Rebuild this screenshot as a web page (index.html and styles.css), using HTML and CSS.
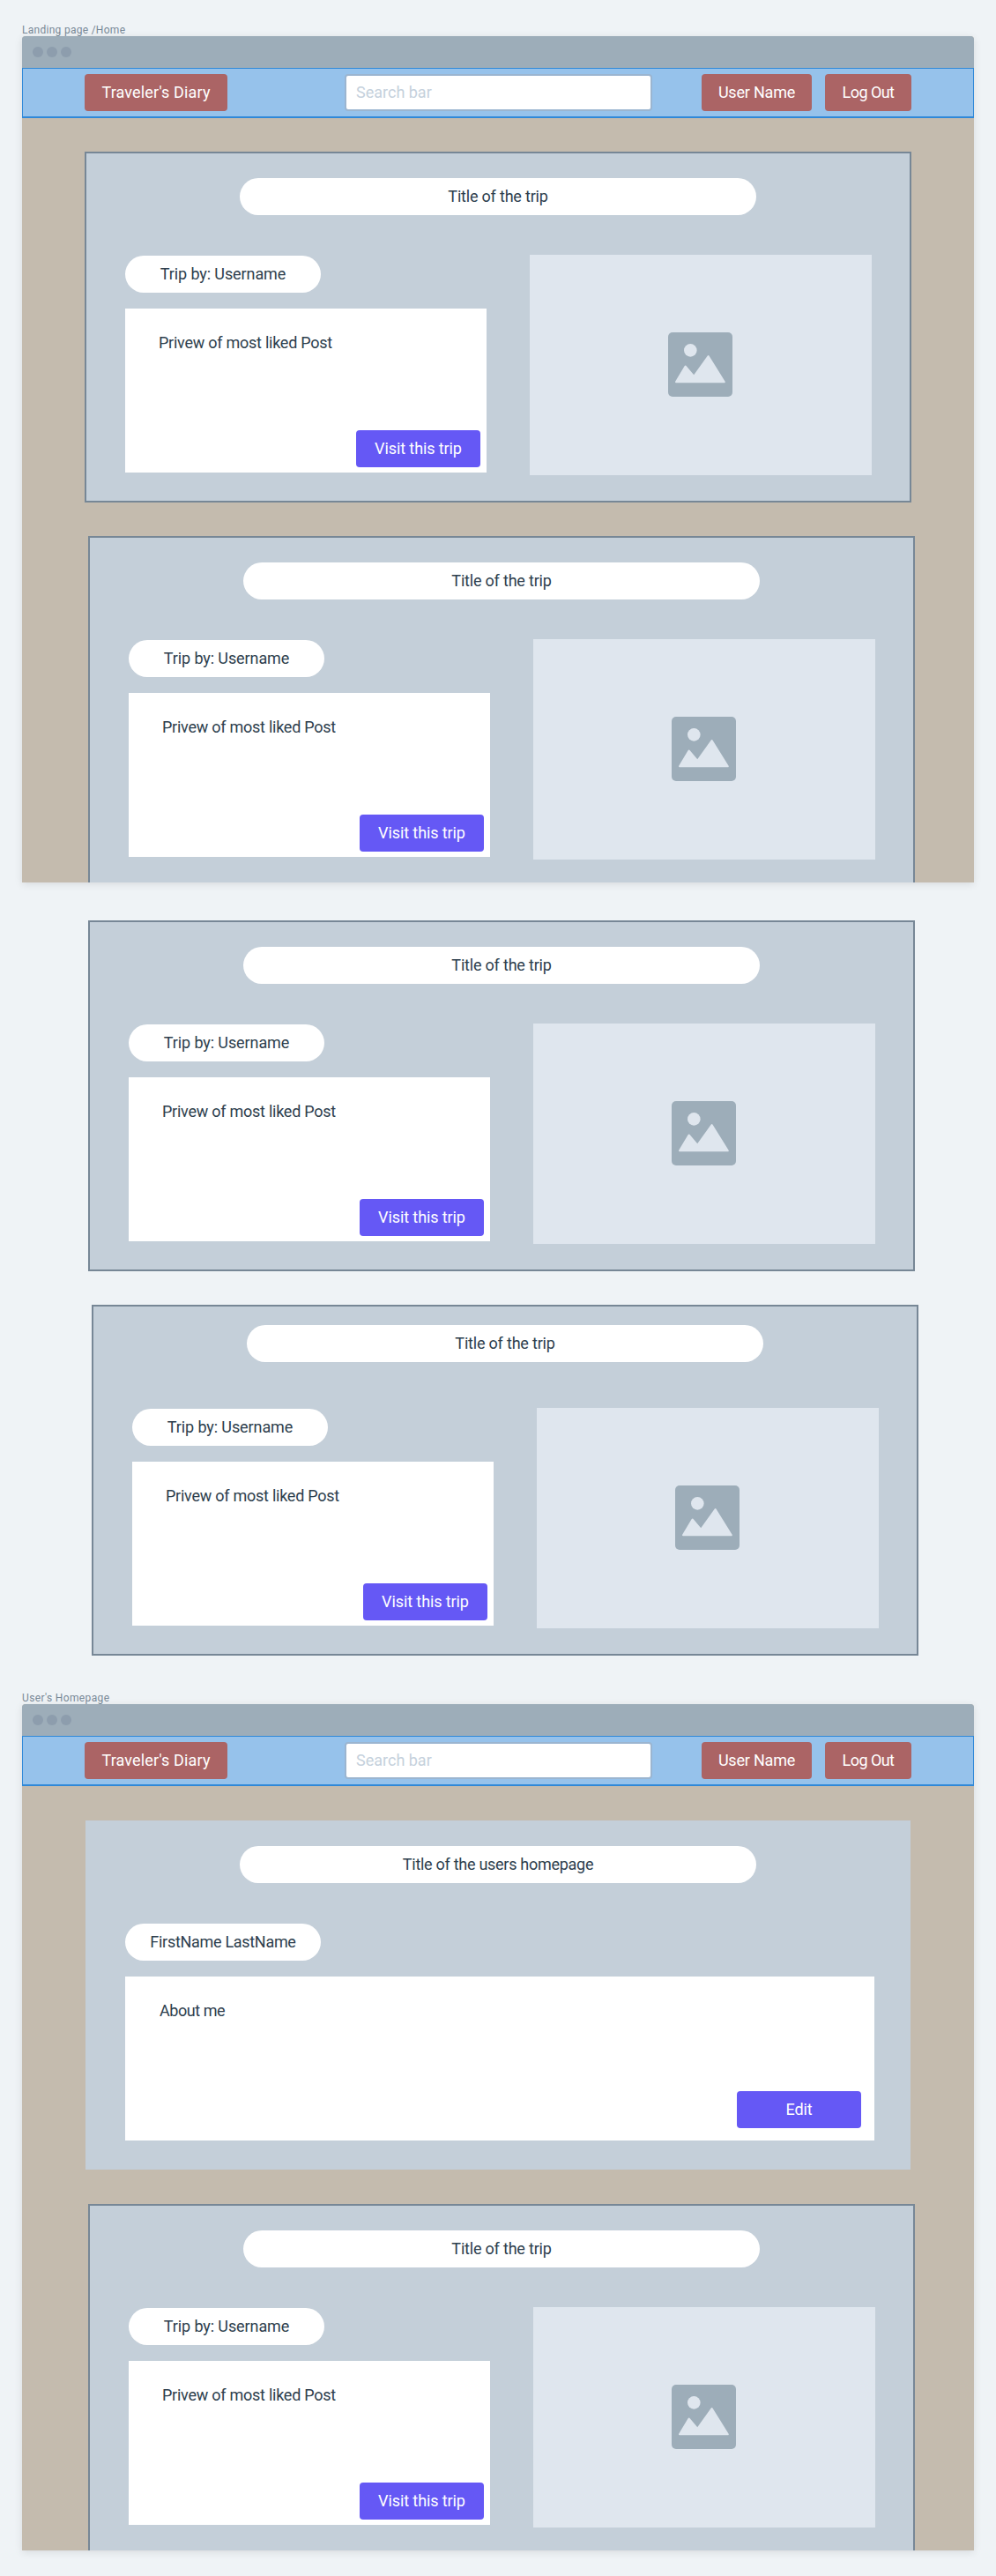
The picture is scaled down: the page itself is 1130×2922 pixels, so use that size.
FILE: index.html
```
<!DOCTYPE html>
<html lang="en">
<head>
<meta charset="utf-8">
<title>Traveler's Diary</title>
<link rel="stylesheet" href="styles.css">
</head>
<body>
<svg class="sprite" aria-hidden="true">
  <symbol id="picture" viewBox="0 0 73 73">
    <rect width="73" height="73" rx="5" fill="#9dadb9"/>
    <circle cx="25.3" cy="20.4" r="7.3" fill="#dfe6ee"/>
    <path d="M9 56.3 19.6 38.5 29.3 49.8 45.6 27 63.8 56.3Z" fill="#dfe6ee" stroke="#dfe6ee" stroke-width="2" stroke-linejoin="round"/>
  </symbol>
</svg>

<h2 class="label">Landing page /Home</h2>
<section class="window">
  <div class="titlebar"><i class="dot"></i><i class="dot"></i><i class="dot"></i></div>
  <nav class="nav">
    <a class="nav-btn brand">Traveler's Diary</a>
    <div class="search">Search bar</div>
    <a class="nav-btn user">User Name</a>
    <a class="nav-btn logout">Log Out</a>
  </nav>
  <main class="feed">
    <article class="card">
      <h3 class="pill title">Title of the trip</h3>
      <div class="row">
        <div class="info">
          <div class="pill byline">Trip by: Username</div>
          <div class="post"><p class="text">Privew of most liked Post</p><a class="action">Visit this trip</a></div>
        </div>
        <div class="photo"><svg class="icon"><use href="#picture"/></svg></div>
      </div>
    </article>
    <article class="card step-1">
      <h3 class="pill title">Title of the trip</h3>
      <div class="row">
        <div class="info">
          <div class="pill byline">Trip by: Username</div>
          <div class="post"><p class="text">Privew of most liked Post</p><a class="action">Visit this trip</a></div>
        </div>
        <div class="photo"><svg class="icon"><use href="#picture"/></svg></div>
      </div>
    </article>
  </main>
</section>

<section class="feed overflow">
  <article class="card step-1">
    <h3 class="pill title">Title of the trip</h3>
    <div class="row">
      <div class="info">
        <div class="pill byline">Trip by: Username</div>
        <div class="post"><p class="text">Privew of most liked Post</p><a class="action">Visit this trip</a></div>
      </div>
      <div class="photo"><svg class="icon"><use href="#picture"/></svg></div>
    </div>
  </article>
  <article class="card step-2">
    <h3 class="pill title raised">Title of the trip</h3>
    <div class="row">
      <div class="info">
        <div class="pill byline">Trip by: Username</div>
        <div class="post"><p class="text">Privew of most liked Post</p><a class="action">Visit this trip</a></div>
      </div>
      <div class="photo"><svg class="icon"><use href="#picture"/></svg></div>
    </div>
  </article>
</section>

<h2 class="label home-label">User's Homepage</h2>
<section class="window">
  <div class="titlebar"><i class="dot"></i><i class="dot"></i><i class="dot"></i></div>
  <nav class="nav">
    <a class="nav-btn brand">Traveler's Diary</a>
    <div class="search">Search bar</div>
    <a class="nav-btn user">User Name</a>
    <a class="nav-btn logout">Log Out</a>
  </nav>
  <main class="feed">
    <article class="card profile">
      <h3 class="pill title">Title of the users homepage</h3>
      <div class="row">
        <div class="info">
          <div class="pill byline">FirstName LastName</div>
          <div class="post"><p class="text">About me</p><a class="action edit">Edit</a></div>
        </div>
      </div>
    </article>
    <article class="card step-1">
      <h3 class="pill title">Title of the trip</h3>
      <div class="row">
        <div class="info">
          <div class="pill byline">Trip by: Username</div>
          <div class="post"><p class="text">Privew of most liked Post</p><a class="action">Visit this trip</a></div>
        </div>
        <div class="photo"><svg class="icon"><use href="#picture"/></svg></div>
      </div>
    </article>
  </main>
</section>
</body>
</html>
```

FILE: styles.css
```
* {
  box-sizing: border-box;
}

body {
  margin: 0;
  padding: 27px 25px 29px;
  background: #eff3f6;
  color: #2d3e4d;
  font: 18px/42px Roboto, "Liberation Sans", sans-serif;
  white-space: nowrap;
}

h2,
h3,
p {
  margin: 0;
  font-weight: 400;
}

.sprite {
  display: none;
}

.label {
  height: 14px;
  color: #788896;
  font-size: 12px;
  line-height: 14px;
  letter-spacing: 0.28px;
}

.home-label {
  margin-top: 41px;
  letter-spacing: 0.36px;
}

.window {
  width: 1080px;
  height: 960px;
  overflow: hidden;
  border-radius: 4px 4px 0 0;
  background: #c4bbae;
  box-shadow: 0 2px 10px rgba(0, 0, 0, 0.1);
}

.titlebar {
  display: flex;
  align-items: center;
  gap: 4px;
  height: 36px;
  padding-left: 12px;
  background: #9dadb9;
}

.dot {
  width: 12px;
  height: 12px;
  border-radius: 50%;
  background: #8d9dad;
}

.nav {
  display: flex;
  align-items: flex-start;
  height: 57px;
  padding: 6px 70px 0;
  border: 1px solid #2f88d8;
  border-bottom-width: 2px;
  background: #96c2eb;
}

.nav-btn {
  height: 42px;
  border-radius: 4px;
  background: #ab6465;
  color: #fff;
  text-align: center;
}

.brand {
  width: 162px;
  letter-spacing: 0.15px;
}

.search {
  width: 349px;
  height: 42px;
  margin: 0 56px 0 133px;
  padding-left: 11px;
  border: 2px solid #9bb5d0;
  border-radius: 4px;
  background: #fff;
  color: #c5d1dc;
  line-height: 38px;
}

.user {
  width: 125px;
  margin-right: 15px;
  letter-spacing: -0.2px;
}

.logout {
  width: 98px;
  letter-spacing: -0.55px;
}

.feed {
  display: flex;
  flex-direction: column;
  gap: 38px;
  padding: 38px 0 0 71px;
}

.overflow {
  padding-top: 43px;
}

.card {
  flex: none;
  width: 938px;
  height: 398px;
  padding: 28px 43px 0 44px;
  border: 2px solid #778796;
  background: #c4cfd9;
}

.step-1 {
  margin-left: 4px;
}

.step-2 {
  margin-left: 8px;
}

.profile {
  width: 936px;
  height: 396px;
  margin: 1px;
  padding: 29px 41px 0 45px;
  border: 0;
}

.pill {
  height: 42px;
  border-radius: 21px;
  background: #fff;
  text-align: center;
}

.title {
  width: 586px;
  margin: 0 0 45px 130px;
  font-size: inherit;
  letter-spacing: -0.2px;
}

.profile .title {
  letter-spacing: -0.28px;
}

.raised {
  margin-top: -7px;
  margin-bottom: 52px;
}

.row {
  display: flex;
  justify-content: space-between;
}

.info {
  display: flex;
  flex-direction: column;
  gap: 18px;
  width: 410px;
  padding-top: 1px;
}

.profile .info {
  width: 850px;
}

.byline {
  width: 222px;
  letter-spacing: -0.1px;
}

.profile .byline {
  letter-spacing: -0.3px;
}

.post {
  display: flex;
  flex-direction: column;
  justify-content: space-between;
  height: 186px;
  padding: 18px 7px 6px 38px;
  background: #fff;
}

.profile .post {
  padding-right: 15px;
  padding-bottom: 14px;
}

.text {
  letter-spacing: -0.25px;
}

.profile .text {
  padding-left: 1px;
  letter-spacing: -0.45px;
}

.action {
  align-self: flex-end;
  width: 141px;
  height: 42px;
  border-radius: 4px;
  background: #6558f5;
  color: #fff;
  text-align: center;
  letter-spacing: -0.1px;
}

.photo {
  width: 388px;
  height: 250px;
  padding: 88px 0 0 157px;
  background: #dfe6ee;
}

.icon {
  display: block;
  width: 73px;
  height: 73px;
}
```
